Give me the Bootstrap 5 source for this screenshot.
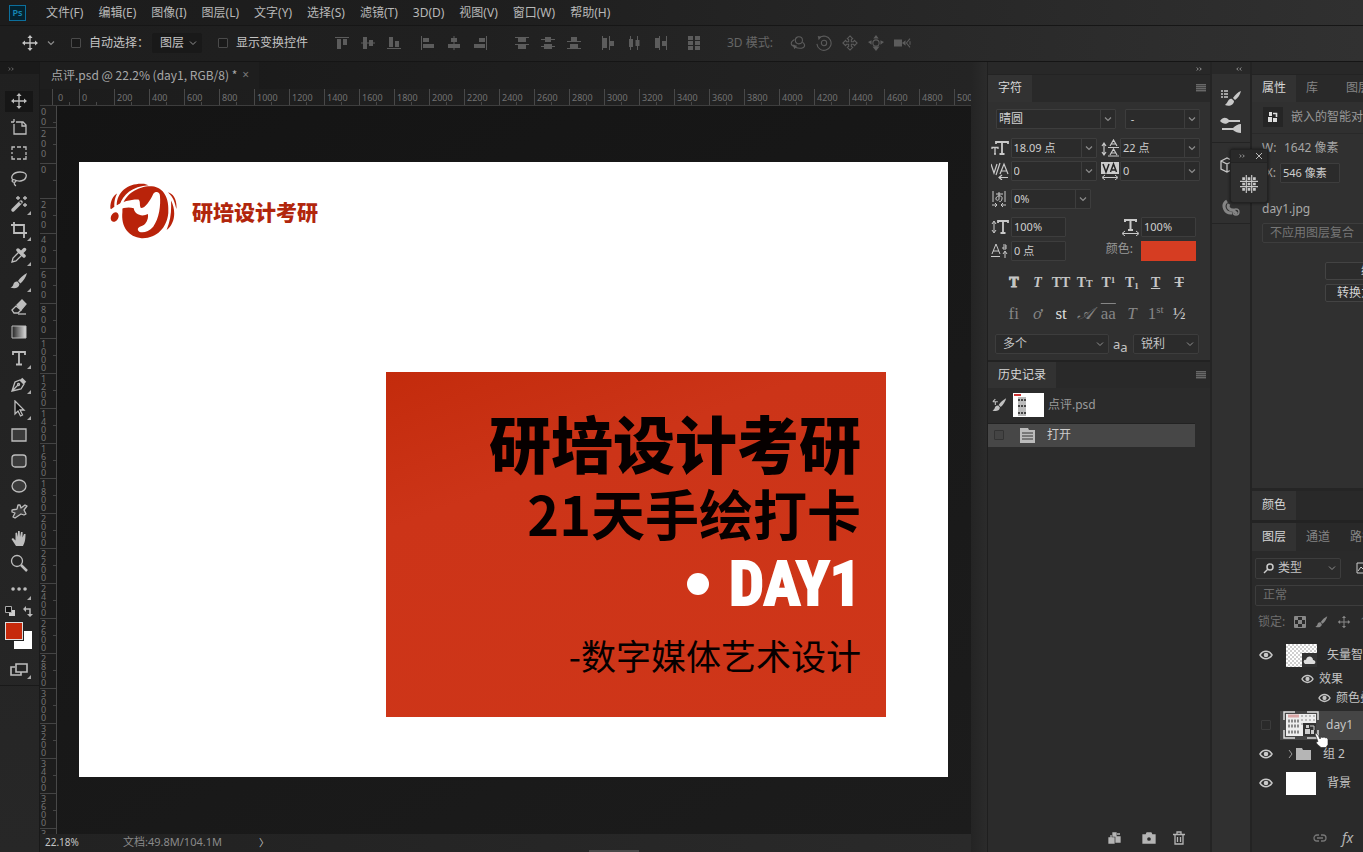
<!DOCTYPE html>
<html lang="zh-CN" data-bs-theme="dark">
<head>
<meta charset="utf-8">
<meta name="viewport" content="width=device-width, initial-scale=1">
<title>点评.psd</title>
<link href="https://cdn.jsdelivr.net/npm/bootstrap@5.3.0/dist/css/bootstrap.min.css" rel="stylesheet">
<style>
:root{--line:#1d1d1d;--edge:#3d3d3d;--txt:#c4c4c4;--dim:#8a8a8a}
body{font:12px/16px "Noto Sans","Noto Sans CJK SC",sans-serif;color:var(--txt);background:#1b1b1b}
svg{display:block;flex:none}
button,a.menu-item{color:inherit;text-decoration:none}
button{background:none;border:0;padding:0}
label{cursor:pointer}
.ico{width:18px;height:18px;fill:none;stroke:currentColor;stroke-width:1.3}
.chev{width:8px;height:8px;fill:none;stroke:#8c8c8c;stroke-width:1.2}
.menu-bar{height:26px;padding-left:9px;background:linear-gradient(90deg,#1c1c1c,#1e1e1e 35%,#303030)}
.menu-list{gap:15px;margin-left:20px;color:#b8b8b8}
.ps-logo{width:17px;height:16px;border:1px solid #0c6f9c;background:#04222f;color:#1787b5;font-size:9px;line-height:13px;font-weight:600;text-align:center}
.opt-bar{height:38px;padding:0 0 0 21px;border-top:1px solid #161616;border-bottom:1px solid #151515;background:linear-gradient(90deg,#1e1e1e,#202020 35%,#313131)}
.opt-bar .cell{width:26px;display:flex;justify-content:center;color:#5c5c5c}
.opt-bar .cell .ico{width:16px;height:16px;fill:currentColor;stroke:none}
.opt-bar .cell .ln{fill:none;stroke:currentColor;stroke-width:1.2}
.form-check-input.tick{width:10px;height:10px;margin:0;border-radius:1px;border:1px solid #4a4a4a;background:#1a1a1a}
.pick{appearance:none;color:inherit;font-size:12px;line-height:16px;border:1px solid var(--edge);border-radius:2px;padding:0 16px 0 7px;background:#2b2b2b url("data:image/svg+xml,%3Csvg xmlns='http://www.w3.org/2000/svg' viewBox='0 0 8 8'%3E%3Cpath d='M1 2.5l3 3 3-3' fill='none' stroke='%23909090'/%3E%3C/svg%3E") no-repeat right 4px center/8px}
.opt-bar .pick{width:50px;height:20px;border-color:#191919;background-color:#191919}
/* tool column */
.tools{width:40px;background:linear-gradient(#202020,#272727);border-right:1px solid #191919;color:#bdbdbd}
.mini-head{height:12px;background:#1a1a1a;color:#8a8a8a;font-size:10px;line-height:8px}
.tool-list{height:513px;margin-top:15px}
.tool{flex:1;width:38px;display:flex;align-items:center;justify-content:center;position:relative}
.tool.on::before{content:"";position:absolute;inset:2px 5px;background:#161616;z-index:0}
.tool svg{position:relative}
.tool.more::after{content:"";position:absolute;right:7px;bottom:2px;border:2px solid transparent;border-right-color:#aaa;border-bottom-color:#aaa}
.swatches{width:27px;height:27px;position:relative;margin:5px 0 0 5px}
.sw{position:absolute;width:18px;height:18px}
.sw.bg-sw{right:0;bottom:0;background:#fff}
.sw.fg-sw{left:0;top:0;background:#c62a0c;border:1px solid #ddd;outline:1px solid #222}
/* document window */
.doc-tabs{height:28px;background:linear-gradient(90deg,#181818,#242424)}
.doc-tab{width:219px;padding-left:11px;background:#1e1e1e;color:#a8a8a8}
.doc-tab span{font-family:"Noto Sans CJK SC",sans-serif}
.ruler-x{height:18px;background:linear-gradient(90deg,#1c1c1c,#242424);border-bottom:1px solid #3d3d3d;color:#727272;font-size:9px;line-height:18px}
.ruler-x i,.ruler-y i{font-style:normal;flex:none;overflow:hidden}
.ruler-x i{width:35px;border-left:1px solid #484848;padding-left:2px;background:repeating-linear-gradient(90deg,transparent 0 16px,#484848 16px 17px,transparent 17px 35px) bottom/100% 3px no-repeat}
.ruler-y{width:17px;background:#1d1d1d;border-right:1px solid #484848;color:#727272;font-size:9px}
.ruler-y i{height:35px;border-top:1px solid #444;padding:1px 7px 0 1px;line-height:10px;word-break:break-all;background:linear-gradient(transparent 16px,#444 16px 17px,transparent 17px) right/3px 100% no-repeat}
.ruler-y i.four{line-height:8px}
.pasteboard{padding:56px 23px 57px 22px;background:linear-gradient(150deg,#141414,#1c1c1c)}
.artboard{background:#fff}
.brand{padding:21px 0 0 31px;gap:15px;color:#b1260c;font:900 21px/28px "Noto Sans CJK SC",sans-serif}
.poster{width:500px;height:345px;padding:32px 25px 0 0;background:linear-gradient(160deg,#c32b0c,#cc3418 30%,#cf3619);color:#060000;font-family:"Noto Sans CJK SC",sans-serif;text-align:right}
.p1{font-size:62px;line-height:76px;font-weight:900}
.p2{font-size:54px;line-height:66px;font-weight:700}
.p3{height:76px;gap:20px;color:#fff;font:700 62px/76px "Liberation Sans Narrow","Roboto Condensed","Liberation Sans",sans-serif;-webkit-text-stroke:2px #fff}
.dot{width:22px;height:22px;border-radius:50%;background:#fff}
.p4{font-size:35px;line-height:66px;font-weight:400}
.status{height:19px;padding-left:5px;background:linear-gradient(90deg,#222,#232323 20%,#2a2a2a);font-size:10px;line-height:16px}
.grip{left:59%;bottom:0;width:50px;height:2px;background:#484848}
.gutter{width:17px;background:linear-gradient(90deg,#242424,#2b2b2b);border-right:1px solid #1f1f1f}
/* docked panels */
.dock-a{width:224px;background:#303030;border-right:2px solid #242424}
.dock-b{width:40px;background:#303030;border-right:2px solid #232323;color:#c8c8c8}
.dock-c{width:111px;background:#303030}
.dock-head{height:12px;background:#282828;color:#b0b0b0}
.ptabs{height:28px;background:#292929;border-top:1px solid #232323}
.ptabs button{padding:0 10px;color:#858585}
.ptabs button.on{background:#323232;color:#d6d6d6}
.burger{width:10px;height:8px;background:repeating-linear-gradient(#686868 0 1px,#444 1px 2px)}
.fld{height:20px;border:1px solid var(--edge);background:#2b2b2b;color:#cfcfcf;font-size:11px;line-height:18px;border-radius:1px}
.fld input{min-width:0;flex:1;border:0;outline:0;background:none;color:inherit;font-size:11px;padding:0 0 0 2px}
.fld button{width:15px;border-left:1px solid var(--edge);display:flex;align-items:center;justify-content:center;align-self:stretch}
.char{padding:7px 10px 0 3px;height:258px}
.char .lead-ic{width:20px;display:flex;align-items:center;color:#c9c9c9}
.char .lead-ic svg{width:18px;height:18px}
.w-a{width:120px}.w-b{width:75px}.w-c{width:86px}.w-d{width:80px}.w-e{width:55px}.w-f{width:114px}.w-g{width:66px}
.char .pick{height:20px}
.glyphs{width:189px;margin-left:11px;font:700 14px/20px "Liberation Serif",serif;color:#c6c6c6}
.glyphs button{flex:1;white-space:nowrap;font:inherit}
.glyphs small{font-size:10px}
.glyphs sup,.glyphs sub{font-size:9px}
.glyphs.ot{font-weight:400;font-size:17px;color:#858585}
.glyphs.ot sup{font-size:11px}
.hist-row{width:207px}
.hist-row.sel{background:#474747;height:24px;border-top:1px solid #222;color:#ccc}
.thumb{width:31px;height:24px;background:#fff}
.foot{height:28px;color:#b5b5b5}
.foot .ico{width:14px;height:14px}
.strip-cell{height:29px;display:flex;align-items:center;justify-content:center}
.float-pal{position:absolute;left:18px;top:87px;width:38px;height:54px;background:#2f2f2f;border:1px solid #222;border-radius:3px;z-index:3;box-shadow:0 0 3px #111;color:#c9c9c9}
.float-pal .bar{height:13px;background:#292929;border-bottom:1px solid #232323}
.nw{white-space:nowrap;overflow:hidden}
.props{height:386px}
.push{border:1px solid #434343;background:#2c2c2c;height:18px;margin:0 -60px 4px 73px;padding-left:11px;text-align:left;line-height:15px;border-radius:2px;color:#d2d2d2}
.layers{background:#2a2a2a}
.layer{height:29px;flex:none;display:flex;align-items:center;white-space:nowrap}
.layer>*{flex:none}
.layer.fx{height:19px;gap:5px}
.eye{width:28px;display:flex;justify-content:center;color:#c8c8c8}
.checker{background:conic-gradient(#cfcfcf 25%,#fff 0 50%,#cfcfcf 0 75%,#fff 0) 0 0/4px 4px}
</style>
</head>
<body class="vh-100 d-flex flex-column overflow-hidden">
<svg width="0" height="0" class="position-absolute" aria-hidden="true">
 <symbol id="chev" viewBox="0 0 8 8"><path d="M1 2.5l3 3 3-3"/></symbol>
 <symbol id="dbl" viewBox="0 0 8 6"><path d="M1 1l2 2-2 2M5 1l2 2-2 2"/></symbol>
 <symbol id="move" viewBox="0 0 18 18"><path d="M9 3v12M3 9h12"/><path d="M9 1l2.6 3H6.400zM9 17l2.600-3H6.400zM1 9l3-2.600v5.200zM17 9l-3-2.600v5.200z" fill="currentColor" stroke="none"/></symbol>
 <symbol id="eye" viewBox="0 0 14 10"><path d="M1 5c3-5 9-5 12 0-3 5-9 5-12 0z" fill="none" stroke="currentColor" stroke-width="1.500"/><circle cx="7" cy="5" r="2.300" fill="currentColor"/></symbol>
 <symbol id="brush" viewBox="0 0 18 18"><path d="M17 1C13 3 10 6 8 9l2.500 2.500C13.500 9 16 5 17 1zM7.500 9.500c-2-.3-3.500.8-4 2.500-.4 1.800-1.400 2.800-3 3.500 3.500 1.500 8.500 1 9-3.500z" fill="currentColor" stroke="none"/></symbol>
 <symbol id="smart" viewBox="0 0 12 12"><path d="M1 6h4v5H1zM2 1h3v4H2zM6 7h4v4H6z" fill="currentColor" stroke="none"/><path d="M6 2.500h3.500V6" fill="none" stroke="currentColor" stroke-width="1.600"/></symbol>
</svg>

<nav class="menu-bar d-flex align-items-center flex-none" aria-label="主菜单">
 <div class="ps-logo">Ps</div>
 <div class="menu-list d-flex">
  <a class="menu-item" href="#">文件(F)</a><a class="menu-item" href="#">编辑(E)</a><a class="menu-item" href="#">图像(I)</a><a class="menu-item" href="#">图层(L)</a><a class="menu-item" href="#">文字(Y)</a><a class="menu-item" href="#">选择(S)</a><a class="menu-item" href="#">滤镜(T)</a><a class="menu-item" href="#">3D(D)</a><a class="menu-item" href="#">视图(V)</a><a class="menu-item" href="#">窗口(W)</a><a class="menu-item" href="#">帮助(H)</a>
 </div>
</nav>

<header class="opt-bar d-flex align-items-center">
 <svg class="ico"><use href="#move"/></svg>
 <svg class="chev ms-2 me-3"><use href="#chev"/></svg>
 <input class="form-check-input tick" type="checkbox" id="auto"><label for="auto" class="ms-2" style="width:63px">自动选择：</label>
 <select class="pick" aria-label="自动选择"><option>图层</option></select>
 <input class="form-check-input tick ms-3" type="checkbox" id="tf"><label for="tf" class="ms-2" style="width:93px">显示变换控件</label>
 <div class="d-flex">
  <button class="cell" aria-label="顶对齐"><svg class="ico" viewBox="0 0 16 16"><path d="M1 2h14v1H1zM3 4h4v10H3zM9 4h4v6H9z"/></svg></button>
  <button class="cell" aria-label="垂直居中"><svg class="ico" viewBox="0 0 16 16"><path d="M1 7.500h14v1H1zM3 2h4v12H3zM9 5h4v6H9z"/></svg></button>
  <button class="cell" aria-label="底对齐"><svg class="ico" viewBox="0 0 16 16"><path d="M1 13h14v1H1zM3 2h4v10H3zM9 6h4v6H9z"/></svg></button>
  <button class="cell ms-2" aria-label="左对齐"><svg class="ico" viewBox="0 0 16 16"><path d="M1 1h1v14H1zM3 3h6v4H3zM3 9h11v4H3z"/></svg></button>
  <button class="cell" aria-label="水平居中"><svg class="ico" viewBox="0 0 16 16"><path d="M7.500 1h1v14h-1zM5 3h6v4H5zM2 9h12v4H2z"/></svg></button>
  <button class="cell" aria-label="右对齐"><svg class="ico" viewBox="0 0 16 16"><path d="M14 1h1v14h-1zM7 3h6v4H7zM2 9h11v4H2z"/></svg></button>
 </div>
 <div class="d-flex ms-3">
  <button class="cell" aria-label="按顶分布"><svg class="ico" viewBox="0 0 16 16"><path d="M1 2h14v1H1zM4 3h8v4H4zM1 9h14v1H1zM4 10h8v4H4z"/></svg></button>
  <button class="cell" aria-label="垂直分布"><svg class="ico" viewBox="0 0 16 16"><path d="M1 4h14v1H1zM5 2h6v5H5zM1 11h14v1H1zM4 9h8v5H4z"/></svg></button>
  <button class="cell" aria-label="按底分布"><svg class="ico" viewBox="0 0 16 16"><path d="M1 6h14v1H1zM5 2h6v4H5zM1 13h14v1H1zM4 9h8v4H4z"/></svg></button>
  <button class="cell ms-2" aria-label="按左分布"><svg class="ico" viewBox="0 0 16 16"><path d="M2 1h1v14H2zM3 3h4v10H3zM9 1h1v14H9zM10 6h4v5h-4z"/></svg></button>
  <button class="cell" aria-label="水平分布"><svg class="ico" viewBox="0 0 16 16"><path d="M4 1h1v14H4zM3 4h4v8H3zM11 1h1v14h-1zM9.500 5h4v6h-4z"/></svg></button>
  <button class="cell" aria-label="按右分布"><svg class="ico" viewBox="0 0 16 16"><path d="M7 1h1v14H7zM3 3h4v10H3zM14 1h1v14h-1zM10 6h4v5h-4z"/></svg></button>
 </div>
 <button class="cell ms-2 me-1" aria-label="自动对齐"><svg class="ico" viewBox="0 0 16 16"><path d="M2 1h5v4H2zM9 1h5v4H9zM2 6h5v4H2zM9 6h5v4H9zM2 11h5v4H2zM9 11h5v4H9z"/></svg></button>
 <span class="ms-3 me-2" style="color:#666;width:50px">3D 模式:</span>
 <button class="cell" aria-label="旋转"><svg class="ico" viewBox="0 0 18 18" style="width:18px"><g class="ln"><circle cx="10" cy="6" r="4"/><path d="M5 5C0 8 0 12 6 13M14 8c4 3 3 7-3 7-3 0-6-2-7-4"/></g><path d="M3 11l5 1-3 4z"/></svg></button>
 <button class="cell" aria-label="滚动"><svg class="ico" viewBox="0 0 18 18"><g class="ln"><circle cx="9" cy="9" r="3"/><path d="M4 3a8 8 0 1 1-3 7"/></g><path d="M2 1l4 1-3 4z"/></svg></button>
 <button class="cell" aria-label="平移"><svg class="ico" viewBox="0 0 18 18"><path class="ln" d="M9 1l3 3-1.500 1v2.500H13L14 6l3 3-3 3-1-1.500h-2.500V13l1.500 1-3 3-3-3 1.500-1v-2.500H5L4 12 1 9l3-3 1 1.500h2.500V5L6 4z"/></svg></button>
 <button class="cell" aria-label="滑动"><svg class="ico" viewBox="0 0 18 18"><circle class="ln" cx="9" cy="9" r="3.500"/><path d="M9 0l3 4H6zM9 18l4-5H5zM0 8l4-2v5zM18 8l-4-2v5z"/></svg></button>
 <button class="cell" aria-label="缩放"><svg class="ico" viewBox="0 0 18 18" style="width:20px"><path d="M0 5h9v8H0zM9 9l4-3v6z"/><path class="ln" d="M18 4l-4 5 4 5M18 7v4"/></svg></button>
</header>

<main class="d-flex flex-grow-1" style="min-height:0">
 <aside class="tools d-flex flex-column flex-shrink-0">
  <div class="mini-head ps-2 pt-1"><svg width="6" height="6" fill="none" stroke="#888"><use href="#dbl"/></svg></div>
  <div class="tool-list d-flex flex-column">
   <button class="tool on" aria-label="移动"><svg class="ico"><use href="#move"/></svg></button>
   <button class="tool" aria-label="画板"><svg class="ico" viewBox="0 0 18 18"><path d="M1 4h3M4 1v3M4 6v10h12V7l-3-3H6M12 4v4h4"/></svg></button>
   <button class="tool" aria-label="选框"><svg class="ico" viewBox="0 0 18 18"><path d="M2 6V3h3M7 3h4M13 3h3v3M16 8v3M16 12v3h-3M11 15H7M5 15H2v-3M2 10V8"/></svg></button>
   <button class="tool" aria-label="套索"><svg class="ico" viewBox="0 0 18 18"><path d="M3 11C0 8 3 3 10 3c5 0 7 2 6 5-1 4-7 5-11 3-2-1-4 1-2 2s4-1 2-2M4 13c0 2 0 3 2 4"/></svg></button>
   <button class="tool more" aria-label="魔棒"><svg class="ico" viewBox="0 0 18 18"><path d="M3 15l8-8" stroke-width="3.500" stroke-linecap="round"/><path d="M9.500 6.500l2 2" stroke="#222"/><path d="M8 1v4M6 3h4M15 1v4M13 3h4M15 8v4M13 10h4"/></svg></button>
   <button class="tool more" aria-label="裁剪"><svg class="ico" viewBox="0 0 18 18" style="stroke-width:1.800"><path d="M1 4h13v11M4 1v11h13M14 12v5"/></svg></button>
   <button class="tool more" aria-label="吸管"><svg class="ico" viewBox="0 0 18 18"><path d="M2 16l1-4 6-6 3 3-6 6z"/><path d="M8 4l6 6M11 7l3.500-3.500" stroke-width="3.500" stroke-linecap="round"/></svg></button>
   <button class="tool more" aria-label="画笔"><svg class="ico"><use href="#brush"/></svg></button>
   <button class="tool" aria-label="橡皮擦"><svg class="ico" viewBox="0 0 18 18"><path d="M2 12l4-4 5 4-3 3H4z"/><path d="M7 7l5-5 4 4-5 6z" fill="currentColor"/><path d="M8 16h8"/></svg></button>
   <button class="tool" aria-label="渐变"><svg width="18" height="18" viewBox="0 0 18 18"><defs><linearGradient id="gr"><stop stop-color="#222"/><stop offset="1" stop-color="#ddd"/></linearGradient></defs><path d="M2 3h14v12H2z" fill="url(#gr)" stroke="#bbb"/></svg></button>
   <button class="tool more" aria-label="文字"><svg class="ico" viewBox="0 0 18 18" style="stroke-width:1.800"><path d="M3 6V3h12v3M9 3v12M6 15.500h6"/></svg></button>
   <button class="tool more" aria-label="钢笔"><svg class="ico" viewBox="0 0 18 18"><path d="M2 16l3-9 5-2 4 4-3 5zM2 16l6-6"/><circle cx="8.500" cy="9.500" r="1"/><path d="M11 4l4 4" stroke-width="3.500"/></svg></button>
   <button class="tool more" aria-label="选择路径"><svg class="ico" viewBox="0 0 18 18"><path d="M5 1v13l3-3 2.500 5 2-1-2.500-5h4z" fill="#111"/></svg></button>
   <button class="tool" aria-label="矩形"><svg class="ico" viewBox="0 0 18 18"><path d="M2 3h14v12H2z" fill="#3b3b3b"/></svg></button>
   <button class="tool" aria-label="圆角矩形"><svg class="ico" viewBox="0 0 18 18"><rect x="2" y="3" width="14" height="12" rx="3" fill="#3b3b3b"/></svg></button>
   <button class="tool" aria-label="椭圆"><svg class="ico" viewBox="0 0 18 18"><ellipse cx="9" cy="9" rx="7" ry="6" fill="#3b3b3b"/></svg></button>
   <button class="tool" aria-label="自定形状"><svg class="ico" viewBox="0 0 18 18"><path d="M2 7c2-1 4 0 5-1l1-4 2 0 1 3 4-3 2 1-3 4 2 4-2 1-3-1-6 4-2-1 2-4-3-1z" fill="#3b3b3b" stroke-linejoin="round"/></svg></button>
   <button class="tool" aria-label="抓手"><svg class="ico" viewBox="0 0 18 18"><path d="M6 17L1.500 10l1.500-1 2.500 2.500V4l1.500-.5L8 8V2h1.700L10 8l1-5h1.600L12.500 8.500 14 5h1.500c0 6-1 9-2.500 12z" fill="currentColor" stroke="none"/></svg></button>
   <button class="tool" aria-label="缩放"><svg class="ico" viewBox="0 0 18 18"><circle cx="7" cy="7" r="5.500"/><path d="M11 11l6 6" stroke-width="2.500"/></svg></button>
   <button class="tool more" aria-label="更多"><svg class="ico" viewBox="0 0 18 18"><path d="M3 9h.1M9 9h.1M15 9h.1" stroke-width="3.500" stroke-linecap="round"/></svg></button>
  </div>
  <div class="d-flex align-items-center gap-2 mt-1" style="padding-left:5px"><svg width="10" height="11" viewBox="0 0 10 11"><path d="M4 4h6v6H4z" fill="#ccc"/><path d="M.5.500h6v6h-6z" fill="#111" stroke="#aaa"/></svg><svg width="10" height="11" viewBox="0 0 10 11"><path d="M2 3h5v5" fill="none" stroke="#bbb" stroke-width="1.500"/><path d="M0 3l3-3v6zM7 11l-3-3h6z" fill="#bbb"/></svg></div>
  <div class="swatches"><span class="sw bg-sw"></span><span class="sw fg-sw"></span></div>
  <button class="tool more" style="flex:0 0 24px;margin-top:8px" aria-label="屏幕模式"><svg class="ico" viewBox="0 0 18 18"><path d="M5 7H1v8h10v-3M6 4h11v8H6z" stroke-width="1.600"/></svg></button>
  <div class="border-top mt-1 flex-grow-1" style="border-color:#191919!important"></div>
 </aside>

 <section class="d-flex flex-column flex-grow-1" style="min-width:0">
  <div class="doc-tabs d-flex"><div class="doc-tab d-flex align-items-center"><span>点评.psd @ 22.2% (day1, RGB/8) *</span><button class="ms-auto" aria-label="关闭" style="color:#777;margin-right:10px">×</button></div></div>
  <div class="ruler-x d-flex overflow-hidden" id="rx"><span style="width:12px;flex:none"></span><i style="width:27px;padding-left:5px">0</i></div>
  <div class="d-flex flex-grow-1" style="min-height:0">
   <div class="ruler-y overflow-hidden flex-shrink-0" id="ry"><i class="d-block border-0" style="height:21px">00</i><i class="d-block" style="height:36px">200</i></div>
   <div class="pasteboard flex-grow-1 d-flex">
    <article class="artboard flex-grow-1 d-flex flex-column justify-content-between">
     <div class="brand d-flex align-items-center">
      <svg width="67" height="56" viewBox="93 75 200 166" fill="#b9230a"><path d="M94 150c0-22 8-37 20-44-7 14-9 28-8 39l-10 8zM113 141c0-42 38-68 82-64l13 4c-48 3-77 28-86 59zM266 102c17 4 28 25 25 50-4-19-9-35-25-50zM275 127c15 28 14 66-13 88 12-30 15-58 13-88z"/><path d="M130 142c8-35 50-60 88-58 38 4 52 38 49 80-4 45-36 77-80 75-38-3-62-34-57-78z"/><ellipse cx="107" cy="176" rx="11" ry="15" transform="rotate(25 107 176)"/><path d="M98 160l14-18c18-12 46-19 66-18 7 6 2 17 7 25 12 1 27-20 37-42 7-10 20-6 20 5 3 30-2 68-20 93-17 20-44 21-46 8 0-9 14-8 22-17s10-22 8-29c-16 9-40 3-42-17-13-4-32-2-41 4-7-1-17 2-25 6z" fill="#fff"/></svg>
      <span>研培设计考研</span>
     </div>
     <div class="poster align-self-end" style="margin:0 62px 60px 0">
      <div class="p1">研培设计考研</div>
      <div class="p2">21天手绘打卡</div>
      <div class="p3 d-flex align-items-center justify-content-end"><span class="dot"></span><span>DAY1</span></div>
      <div class="p4">-数字媒体艺术设计</div>
     </div>
    </article>
   </div>
  </div>
  <footer class="status d-flex position-relative"><span style="width:78px">22.18%</span><span style="width:136px;color:#8a8a8a;font-size:11px">文档:49.8M/104.1M</span><button aria-label="更多信息">〉</button><span class="grip position-absolute"></span></footer>
 </section>
 <div class="gutter flex-shrink-0"></div>

 <aside class="dock-a d-flex flex-column flex-shrink-0">
  <div class="dock-head d-flex justify-content-end pe-2 pt-1"><svg width="6" height="6" fill="none" stroke="#bbb"><use href="#dbl"/></svg></div>
  <div class="ptabs d-flex align-items-stretch"><button class="on">字符</button><span class="burger ms-auto me-1 my-auto"></span></div>
  <div class="char d-flex flex-column">
   <div class="d-flex" style="gap:9px;padding-left:5px">
    <div class="fld w-a d-flex"><input aria-label="字体" value="晴圆" style="font-size:12px"><button aria-label="字体列表"><svg class="chev"><use href="#chev"/></svg></button></div>
    <div class="fld w-b d-flex"><input aria-label="字形" value=" -"><button aria-label="字形列表"><svg class="chev"><use href="#chev"/></svg></button></div>
   </div>
   <div class="d-flex" style="margin-top:9px">
    <span class="lead-ic"><svg viewBox="0 0 18 18" fill="none" stroke="currentColor" stroke-width="1.800"><path d="M5 5V3h12v2M11 3v12M8.500 15h5"/><path d="M1 10V8.500h6V10M4 8.500v6M3 15h2" stroke-width="1.300"/></svg></span>
    <div class="fld w-c d-flex"><input aria-label="字号" value="18.09 点"><button aria-label="字号列表"><svg class="chev"><use href="#chev"/></svg></button></div>
    <span class="lead-ic ms-1"><svg viewBox="0 0 18 18" fill="none" stroke="currentColor"><path d="M3 5v10M1 7l2-3 2 3M1 13l2 3 2-3M7 8.500h11M7 17h11M9 7l3.500-6L16 7M10 5h5M9 16l3.500-6 3.500 6M10 14h5" stroke-width="1.200"/></svg></span>
    <div class="fld w-d d-flex"><input aria-label="行距" value="22 点"><button aria-label="行距列表"><svg class="chev"><use href="#chev"/></svg></button></div>
   </div>
   <div class="d-flex" style="margin-top:3px">
    <span class="lead-ic"><svg viewBox="0 0 18 18" fill="none" stroke="currentColor" stroke-width="1.200"><path d="M0 2l3 9 3-9M5 13L9 1M9 12l4-10 4 10M10 9h6M8 15.500h9M11 13l-3 2.500 3 2.500"/></svg></span>
    <div class="fld w-c d-flex"><input aria-label="字距微调" value="0"><button aria-label="微调列表"><svg class="chev"><use href="#chev"/></svg></button></div>
    <span class="lead-ic ms-1"><svg viewBox="0 0 18 18" fill="none" stroke="currentColor"><path d="M0 0h18v12H0z" fill="#ccc" stroke="none"/><path d="M2 2l3 8 3-8M9.500 10l3-8 3 8M11 8h3.500" stroke="#222" stroke-width="1.500"/><path d="M2 15.500h14M4 13l-3 2.500L4 18M14 13l3 2.500-3 2.500"/></svg></span>
    <div class="fld w-d d-flex"><input aria-label="字距" value="0"><button aria-label="字距列表"><svg class="chev"><use href="#chev"/></svg></button></div>
   </div>
   <div class="d-flex mt-2">
    <span class="lead-ic"><svg viewBox="0 0 18 18" fill="none" stroke="currentColor"><path d="M2 1v11M14 1v11M5 4h7M8 2v6c1 3-4 3-3 0s7-3 6 1-3 2-3 2M1 15h5M4 13l2 2-2 2M15 15h-5M12 13l-2 2 2 2"/></svg></span>
    <div class="fld w-d d-flex"><input aria-label="比例间距" value="0%"><button aria-label="比例列表"><svg class="chev"><use href="#chev"/></svg></button></div>
   </div>
   <div class="d-flex mt-2">
    <span class="lead-ic"><svg viewBox="0 0 18 18" fill="none" stroke="currentColor"><path d="M3 4v10M1 6l2-3 2 3M1 12l2 3 2-3"/><path d="M7 5V3h10v2M12 3v12M9.500 15h5" stroke-width="1.800"/></svg></span>
    <div class="fld w-e d-flex"><input aria-label="垂直缩放" value="100%"></div>
    <span class="lead-ic ms-auto"><svg viewBox="0 0 18 18" fill="none" stroke="currentColor"><path d="M4 4V2h11v2M9.500 2v10M7 12h5" stroke-width="2"/><path d="M2 15.500h15M4 13l-3 2.500L4 18M15 13l3 2.500-3 2.500"/></svg></span>
    <div class="fld w-e d-flex me-1"><input aria-label="水平缩放" value="100%"></div>
   </div>
   <div class="d-flex mt-1">
    <span class="lead-ic"><svg viewBox="0 0 18 18" fill="none" stroke="currentColor"><path d="M1 12l4-10 4 10M2 9h6M0 14.500h9M14 10v6M12 12l2-3 2 3M12 3h3v4h-3V5h3"/></svg></span>
    <div class="fld w-e d-flex"><input aria-label="基线偏移" value="0 点"></div>
    <label for="tc" class="ms-auto me-1 pe-1" style="color:#999">颜色:</label><button id="tc" class="w-e me-1" aria-label="文本颜色" style="height:20px;background:#d63d22"></button>
   </div>
   <div class="glyphs d-flex mt-2 pt-1"><button><b style="-webkit-text-stroke:1px">T</b></button><button><i>T</i></button><button>TT</button><button>T<small>T</small></button><button>T<sup>1</sup></button><button>T<sub>1</sub></button><button><u>T</u></button><button><s>T</s></button></div>
   <div class="glyphs ot d-flex" style="margin-top:10px"><button>fi</button><button><i>ơ</i></button><button style="color:#ddd">st</button><button><i>𝒜</i></button><button style="text-decoration:overline">aa</button><button><i>T</i></button><button>1<sup>st</sup></button><button style="color:#ccc">½</button></div>
   <div class="d-flex align-items-center" style="margin-top:10px;padding-left:4px"><select class="pick w-f" aria-label="语言"><option>多个</option></select><span class="px-1" style="width:24px;font-size:13px;white-space:nowrap">a<sub style="font-size:13px">a</sub></span><select class="pick w-g" aria-label="消除锯齿"><option>锐利</option></select></div>
  </div>
  <div class="ptabs d-flex" style="border-top:2px solid #222"><button class="on">历史记录</button><span class="burger ms-auto me-1 my-auto"></span></div>
  <div class="flex-grow-1" style="background:#2b2b2b">
   <div class="hist-row d-flex align-items-center" style="height:35px;padding-left:4px;color:#9a9a9a"><svg class="ico" viewBox="0 0 18 18" style="width:15px;color:#c0c0c0"><use href="#brush"/><path d="M1 5h6M1 5l3-3M4 5v4"/></svg><span class="thumb me-1" style="margin-left:6px"><svg width="31" height="24"><path d="M1 1h7v2H1z" fill="#c33"/><path d="M5 4h8v19H5z" fill="#bbb"/><path d="M5 7h8M5 13h8M5 20h8" stroke="#444" stroke-width="2" stroke-dasharray="2 1"/></svg></span><span>点评.psd</span></div>
   <div class="hist-row sel d-flex align-items-center" style="padding-left:6px"><input class="form-check-input tick" type="checkbox" aria-label="历史源" style="background:#444;border-color:#333"><svg class="ms-3" width="15" height="15" viewBox="0 0 15 15"><path d="M0 0h8l1 2h6v13H0z" fill="#bbb"/><path d="M2 5h11M2 8h11M2 11h11" stroke="#333"/></svg><span class="ms-2 ps-1">打开</span></div>
  </div>
  <div class="foot d-flex align-items-center justify-content-end gap-3 pe-4" style="background:#2b2b2b">
   <button aria-label="新建文档"><svg class="ico" viewBox="0 0 14 14"><path d="M1 7h5v5H1zM5 2h3v3H5zM8 6h4v5H8z" fill="currentColor"/><path d="M9 3h3M3 4v3"/></svg></button>
   <button aria-label="快照" class="ps-1"><svg class="ico" viewBox="0 0 14 14"><path d="M1 4h3l1-2h4l1 2h3v8H1z" fill="currentColor"/><circle cx="7" cy="8" r="2.500" fill="#2b2b2b"/></svg></button>
   <button aria-label="删除"><svg class="ico" viewBox="0 0 14 14"><path d="M1 3.500h12M5 3V1h4v2M3 4v9h8V4M5.500 6v5M8.500 6v5"/></svg></button>
  </div>
 </aside>

 <aside class="dock-b flex-shrink-0 position-relative">
  <div class="dock-head mb-2 d-flex justify-content-end pe-2 pt-1"><svg width="6" height="6" fill="none" stroke="#bbb" viewBox="0 0 8 6"><path d="M3 1L1 3l2 2M7 1L5 3l2 2"/></svg></div>
  <button class="strip-cell w-100 pt-1" aria-label="画笔设置"><svg class="ico" viewBox="0 0 22 18" style="width:22px"><path d="M1 2h2M4 2h4M1 5h2M4 5h4M1 8h2M4 8h4"/><path d="M21 2c-3 1-6 4-8 7l2 2c3-2 5-5 6-9zM12 10c-4-1-4 4-7 6 4 2 9 0 9-4z" fill="currentColor" stroke="none"/></svg></button>
  <button class="strip-cell w-100" aria-label="画笔"><svg class="ico" viewBox="0 0 22 18" style="width:22px"><path d="M0 5c3-4 6-4 9-1h11v2H9C6 9 3 8 0 5zM21 8v9c-3 0-6-1-8-3H2v-2h11c2-2 5-4 8-4z" fill="currentColor" stroke="none"/></svg></button>
  <div style="border-top:1px solid #232323;margin-top:2px"></div>
  <button class="strip-cell w-100 mt-2 pe-2" aria-label="3D"><svg class="ico" viewBox="0 0 18 18"><path d="M3 5l6-3 6 3v8l-6 3-6-3zM3 5l6 3 6-3M9 8v8"/></svg></button>
  <button class="strip-cell w-100" aria-label="云" style="color:#858585;margin-top:14px"><svg class="ico" viewBox="0 0 18 18"><path d="M5 2C-1 6 3 15 10 14M7 5c-2 3 0 6 4 6l4 4" stroke-width="3"/><circle cx="14" cy="13" r="3"/></svg></button>
  <div style="border-top:1px solid #242424"></div>
  <div class="float-pal"><div class="bar d-flex align-items-center justify-content-between px-1"><svg class="ms-1" width="6" height="6" fill="none" stroke="#bbb"><use href="#dbl"/></svg><svg width="8" height="8" stroke="#bbb"><path d="M1 1l6 6M7 1l-6 6"/></svg></div>
   <svg class="mx-auto mt-2 pt-1" width="20" height="22" viewBox="0 0 20 20" fill="none" stroke="currentColor"><path d="M7 0v20M13 0v20M0 7h20M0 13h20" stroke-width="1.300"/><path d="M2.500 4h15M2.500 10h15M2.500 16h15" stroke-width="3" stroke-dasharray="3 3"/></svg></div>
 </aside>

 <aside class="dock-c d-flex flex-column flex-shrink-0 nw">
  <div class="dock-head flex-shrink-0"></div>
  <div class="ptabs d-flex flex-shrink-0"><button class="on">属性</button><button>库</button><button class="ms-2">图层复合</button></div>
  <div class="props flex-shrink-0 nw">
   <div class="d-flex align-items-center border-bottom" style="height:32px;padding-left:11px;gap:8px;border-color:#292929!important;color:#989898"><span class="p-1" style="background:#252525;color:#ddd"><svg width="12" height="12"><use href="#smart"/></svg></span>嵌入的智能对象</div>
   <div class="d-flex align-items-center" style="height:28px;padding-left:10px;color:#a5a5a5"><span style="width:22px">W:</span>1642 像素</div>
   <div class="d-flex align-items-center" style="height:22px;padding-left:10px;color:#a5a5a5"><label for="px" style="width:18px" class="text-end pe-1">X:</label><div class="fld w-auto d-flex" style="max-width:60px"><input id="px" value="546 像素"></div></div>
   <div style="padding:17px 0 6px 10px;color:#a8a8a8">day1.jpg</div>
   <select class="pick" aria-label="图层复合" style="width:150px;height:20px;margin:0 0 19px 10px;color:#777;background-color:#2e2e2e"><option>不应用图层复合</option></select>
   <button class="push d-block" style="padding-left:35px;width:120px">编辑内容</button>
   <button class="push d-block" style="width:120px">转换为图层...</button>
  </div>
  <div class="ptabs d-flex flex-shrink-0" style="height:32px;border-top:3px solid #252525"><button class="on">颜色</button></div>
  <div class="ptabs d-flex flex-shrink-0" style="height:31px;border-top:3px solid #232323"><button class="on">图层</button><button>通道</button><button>路径</button></div>
  <div class="layers flex-grow-1 d-flex flex-column">
   <div class="d-flex align-items-center" style="padding:7px 0 0 3px;gap:15px"><div class="position-relative"><select class="pick" aria-label="过滤类型" style="width:86px;height:21px;padding-left:22px"><option>类型</option></select><svg class="position-absolute" style="left:8px;top:5px" width="11" height="11" fill="none" stroke="#ccc" stroke-width="1.500"><circle cx="7" cy="4" r="3"/><path d="M5 6l-4 4"/></svg></div><svg width="12" height="12" fill="none" stroke="#ccc"><path d="M1 1h11v10H1zM2 9l3-4 3 3" /></svg></div>
   <select class="pick" aria-label="混合模式" style="width:150px;height:21px;margin:6px 0 0 3px;color:#6e6e6e"><option>正常</option></select>
   <div class="d-flex align-items-center" style="height:32px;padding-left:6px;color:#6e6e6e;gap:9px"><span style="width:29px">锁定:</span><svg width="12" height="12" viewBox="0 0 12 12"><path d="M.5.500h11v11H.5z" fill="none" stroke="#888"/><path d="M1 1h3v3H1zM8 1h3v3H8zM4 4h4v4H4zM1 8h3v3H1zM8 8h3v3H8z" fill="#888"/></svg><svg width="13" height="14" viewBox="0 0 18 18" color="#888"><use href="#brush"/></svg><svg class="ico" style="width:14px;color:#888" viewBox="0 0 18 18"><use href="#move"/></svg>1</div>
   <div class="layer" style="margin-top:3px"><span class="eye me-1"><svg width="14" height="10"><use href="#eye"/></svg></span><span class="checker" style="width:31px;height:23px;margin-left:2px"><svg width="31" height="23" viewBox="0 0 31 23"><path d="M16 9h15v14H16z" fill="#333"/><path d="M19 20c-3-3 0-5 1-4 1-5 7-4 7 0 3 0 3 4 1 4z" fill="#ddd"/></svg></span><span style="margin-left:10px">矢量智能对象</span></div>
   <div class="layer fx" style="padding-left:49px"><svg width="13" height="10"><use href="#eye"/></svg>效果</div>
   <div class="layer fx" style="padding-left:66px"><svg width="13" height="10"><use href="#eye"/></svg>颜色叠加</div>
   <div class="layer position-relative" style="margin-top:3px"><span class="eye"><input class="form-check-input tick" type="checkbox" aria-label="显示 day1" style="background:none;border-color:#3b3b3b"></span><div class="d-flex align-items-center h-100 flex-grow-1" style="background:#454545;padding-left:3px;gap:7px"><svg width="36" height="28" viewBox="0 0 36 28" fill="none"><path d="M3 3h30v22H3z" fill="#eee"/><path d="M18 5h14M18 9h14M18 13h3" stroke="#bbb" stroke-width="2" stroke-dasharray="2 2"/><path d="M5 5h11" stroke="#d9a5a5" stroke-width="3"/><path d="M5 10h12M5 15h12M5 21h12" stroke="#888" stroke-width="3" stroke-dasharray="2 1"/><path d="M20 12h13v13H20z" fill="#333"/><path d="M22 18h5v5h-5zM23 14h3v3h-3zM28 19h3v4h-3z" fill="#ccc"/><path d="M27 15h4v4" stroke="#ccc"/><path d="M1 9V1h11M24 1h11v8M35 19v8H24M12 27H1v-8" stroke="#ddd" stroke-width="1.500"/></svg>day1</div>
    <svg class="position-absolute" style="left:62px;top:22px;z-index:2" width="15" height="16" viewBox="0 0 15 16"><path d="M1 1c1-1 2 0 3 1l2 4 1-2 2 .5L10 4l2 1 1-.5 1 2v5l-2 3H7L3 11 2 9l2-.5z" fill="#fff" stroke="#222" stroke-width=".6"/></svg></div>
   <div class="layer"><span class="eye me-1"><svg width="14" height="10"><use href="#eye"/></svg></span><svg width="6" height="10" fill="none" stroke="#999" class="ms-1"><path d="M1 1l3 4-3 4"/></svg><svg width="15" height="12" style="margin-left:2px"><path d="M0 0h6l1 2h8v10H0z" fill="#b5b5b5"/></svg><span style="margin-left:12px">组 2</span></div>
   <div class="layer"><span class="eye me-1"><svg width="14" height="10"><use href="#eye"/></svg></span><span class="bg-white" style="width:30px;height:23px;margin-left:2px"></span><span style="margin-left:11px">背景</span></div>
   <div class="foot mt-auto d-flex align-items-center" style="padding-left:61px;gap:15px"><svg width="14" height="8" fill="none" stroke="#777" stroke-width="1.300"><path d="M6 1H4a3 3 0 0 0 0 6h2M8 1h2a3 3 0 0 1 0 6H8M4 4h6"/></svg><i style="font-size:14px">fx</i></div>
  </div>
 </aside>
</main>
<script src="https://cdn.jsdelivr.net/npm/bootstrap@5.3.0/dist/js/bootstrap.bundle.min.js"></script>
<script>
// Ruler labels: one cell for every 200 document pixels
const rx = document.getElementById('rx'), ry = document.getElementById('ry');
for (let n = 0; n <= 5000; n += 200) { const c = document.createElement('i'); c.textContent = n < 5000 ? n : 500; rx.append(c); }
for (let n = 0; n <= 3800; n += 200) { const c = document.createElement('i'); c.className = 'd-block' + (n > 999 ? ' four' : ''); c.textContent = n; ry.append(c); }
</script>
</body>
</html>
